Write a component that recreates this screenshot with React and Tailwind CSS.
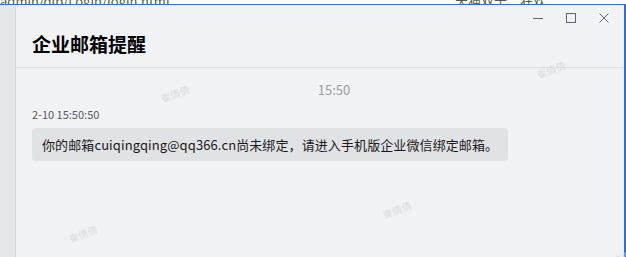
import React from 'react'

const font = { fontFamily: '"Microsoft YaHei", "Noto Sans CJK SC", "Liberation Sans", sans-serif' }

const marks = [
  { left: 160, top: 86 },
  { left: 536, top: 62 },
  { left: 68, top: 226 },
  { left: 382, top: 202 },
  { left: 612, top: 248 },
]

function WindowControls() {
  return (
    <div className="flex items-center justify-end gap-[21px] pr-[14px] pt-[7px] text-[#5f6670]">
      <svg width="12" height="12" viewBox="0 0 12 12">
        <path d="M1 6.5h10" stroke="currentColor" strokeWidth="1" />
      </svg>
      <svg width="12" height="12" viewBox="0 0 12 12">
        <rect x="1.5" y="1.5" width="9" height="9" fill="none" stroke="currentColor" strokeWidth="1" />
      </svg>
      <svg width="12" height="12" viewBox="0 0 12 12">
        <path d="M1.5 1.5l9 9M10.5 1.5l-9 9" stroke="currentColor" strokeWidth="1" />
      </svg>
    </div>
  )
}

export default function App() {
  return (
    <div className="relative w-[626px] h-[257px] overflow-hidden bg-white" style={font}>
      {/* browser behind the dialog */}
      <div className="h-[4px] overflow-hidden relative">
        <div className="absolute -top-[9px] left-0 text-[13px] text-[#555] whitespace-nowrap">admin/dip/Login/login.html</div>
        <div className="absolute -top-[9px] left-[455px] text-[13px] text-[#555] whitespace-nowrap">天猫双十二狂欢</div>
      </div>
      <div className="flex h-[253px] border-t border-[#2f6fcf]">
        <div className="w-[16px] bg-[#e5e6ea] border-r border-[#d6d7db]" />
        <div className="flex-1 flex flex-col bg-[#f1f2f4] border-r-2 border-[#2f6fcf]">
          <WindowControls />
          <div className="px-[16px] pt-[8px] pb-[11px] border-b border-[#dcdde0]">
            <h1 className="text-[19px] font-bold text-black leading-[24px]">企业邮箱提醒</h1>
          </div>
          <div className="pt-[13px] text-center text-[13px] text-[#9a9ea5] leading-[18px] pl-[28px]">15:50</div>
          <div className="pl-[16px] pt-[8px] text-[11px] text-[#555a60] leading-[14px]">2-10 15:50:50</div>
          <div className="pl-[16px] pt-[7px]">
            <div className="inline-block bg-[#e1e2e5] rounded-[4px] px-[10px] py-[7px] text-[13px] tracking-[0.1px] text-[#1a1a1a] leading-[19px]">
              你的邮箱cuiqingqing@qq366.cn尚未绑定，请进入手机版企业微信绑定邮箱。
            </div>
          </div>
        </div>
      </div>
      {marks.map((m, i) => (
        <div
          key={i}
          className="absolute text-[10px] text-[#dcdde1] -rotate-[20deg] whitespace-nowrap pointer-events-none"
          style={{ left: m.left, top: m.top }}
        >
          崔倩倩
        </div>
      ))}
    </div>
  )
}
